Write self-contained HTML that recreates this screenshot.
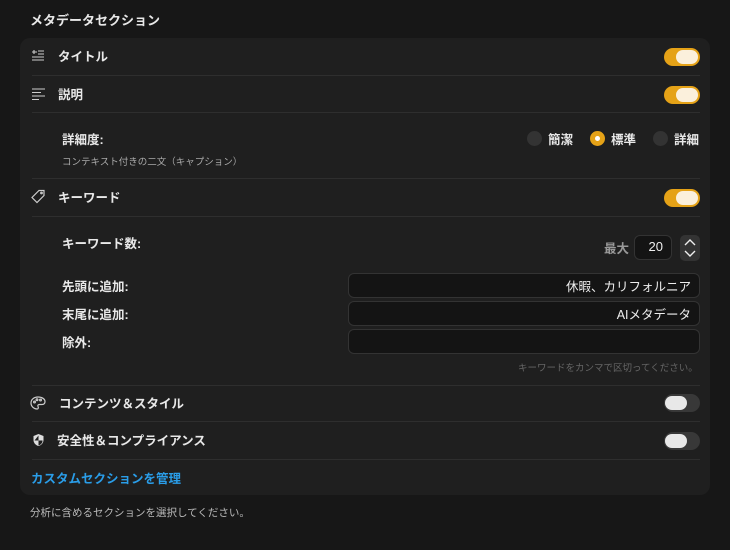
<!DOCTYPE html>
<html><head><meta charset="utf-8"><style>
*{margin:0;padding:0;box-sizing:border-box}
body{width:730px;height:550px;background:#171717;font-family:"Liberation Sans","Noto Sans CJK JP",sans-serif;color:#e6e6e6;position:relative;overflow:hidden}
.a{position:absolute}
.card{left:20px;top:38px;width:690px;height:457px;background:#1f1f1f;border-radius:10px}
.div{position:absolute;left:32px;width:668px;height:1px;background:#2e2e2e}
.lbl{font-size:12.5px;font-weight:bold;color:#e8e8e8;white-space:nowrap;margin-top:-2px}
.tg{position:absolute;left:664px;width:36px;height:18px;border-radius:9px}
.tg.on{background:#e5a217}
.tg.off{background:#383838}
.tg i{position:absolute;top:2px;width:22px;height:14px;border-radius:7px}
.tg.on i{right:2px;background:#fbf0dc}
.tg.off i{left:1px;background:#e8e8e8}
.inp{position:absolute;left:348px;width:352px;height:25px;background:#141414;border:1px solid #333;border-radius:6px;font-size:12.5px;color:#eee;text-align:right;padding:2px 8px 0 0}
.rad{position:absolute;width:15px;height:15px;border-radius:50%;background:#333}
</style></head><body>
<div class="a lbl" style="left:30px;top:12px;font-size:13px">メタデータセクション</div>
<div class="a card"></div>

<svg class="a" style="left:31px;top:49px" width="15" height="14" viewBox="0 0 15 14" fill="none" stroke="#ccc" stroke-width="1.1"><path d="M1 3h5M3 1v4M7 2h6M7 5h6M1 8h12M1 11h12"/></svg>
<div class="a lbl" style="left:58px;top:48px">タイトル</div>
<div class="tg on" style="top:48px"><i></i></div>
<div class="div" style="top:75px"></div>

<svg class="a" style="left:31px;top:88px" width="15" height="12" viewBox="0 0 15 12" fill="none" stroke="#ccc" stroke-width="1.1"><path d="M1 1h13M1 4.5h9M1 8h13M1 11.5h7"/></svg>
<div class="a lbl" style="left:58px;top:86px">説明</div>
<div class="tg on" style="top:86px"><i></i></div>
<div class="div" style="top:112px"></div>

<div class="a lbl" style="left:62px;top:131px">詳細度:</div>
<div class="a" style="left:62px;top:154px;font-size:9.5px;color:#aaa">コンテキスト付きの二文（キャプション）</div>
<div class="rad" style="left:527px;top:131px"></div>
<div class="a lbl" style="left:548px;top:131px">簡潔</div>
<div class="rad" style="left:590px;top:131px;background:#e5a217"><div style="position:absolute;left:5px;top:5px;width:5px;height:5px;border-radius:50%;background:#fff"></div></div>
<div class="a lbl" style="left:611px;top:131px">標準</div>
<div class="rad" style="left:653px;top:131px"></div>
<div class="a lbl" style="left:674px;top:131px">詳細</div>
<div class="div" style="top:178px"></div>

<svg class="a" style="left:30px;top:189px" width="16" height="15" viewBox="0 0 16 15" fill="none" stroke="#ccc" stroke-width="1.2"><path d="M9 1.5h5v5L7 13.5 2 8.5z"/><circle cx="11.5" cy="4" r=".8"/></svg>
<div class="a lbl" style="left:58px;top:189px">キーワード</div>
<div class="tg on" style="top:189px"><i></i></div>
<div class="div" style="top:216px"></div>

<div class="a lbl" style="left:62px;top:235px">キーワード数:</div>
<div class="a lbl" style="left:604px;top:240px;color:#999">最大</div>
<div class="a" style="left:634px;top:235px;width:38px;height:25px;background:#141414;border:1px solid #333;border-radius:6px;font-size:13px;text-align:right;padding:3px 8px 0 0;color:#eee">20</div>
<div class="a" style="left:680px;top:235px;width:20px;height:26px;background:#333;border-radius:5px"></div>
<svg class="a" style="left:680px;top:235px" width="20" height="26" viewBox="0 0 20 26" fill="none" stroke="#eee" stroke-width="1.4"><path d="M5 10l5-5 5 5M5 16l5 5 5-5"/></svg>

<div class="a lbl" style="left:62px;top:278px">先頭に追加:</div>
<div class="inp" style="top:273px">休暇、カリフォルニア</div>
<div class="a lbl" style="left:62px;top:306px">末尾に追加:</div>
<div class="inp" style="top:301px">AIメタデータ</div>
<div class="a lbl" style="left:62px;top:334px">除外:</div>
<div class="inp" style="top:329px"></div>
<div class="a" style="left:518px;top:360px;font-size:9.5px;color:#666">キーワードをカンマで区切ってください。</div>
<div class="div" style="top:385px"></div>

<svg class="a" style="left:30px;top:396px" width="16" height="14" viewBox="0 0 16 14" fill="none" stroke="#ccc" stroke-width="1.2"><path d="M8 1C4 1 1 3.5 1 7s3 6 6 6c1.5 0 1.5-1.5 1-2.5s0-2 1.5-2H12c2 0 3-1 3-3C15 3 12 1 8 1z"/><circle cx="4.5" cy="6" r=".9"/><circle cx="7" cy="3.8" r=".9"/><circle cx="10.5" cy="4" r=".9"/></svg>
<div class="a lbl" style="left:59px;top:395px">コンテンツ＆スタイル</div>
<div class="tg off" style="top:394px"><i></i></div>
<div class="div" style="top:421px"></div>

<svg class="a" style="left:32px;top:433px" width="13" height="14" viewBox="0 0 13 14"><path d="M6.5 1L1.5 3v4c0 3 2.5 5.5 5 6 2.5-.5 5-3 5-6V3z" fill="#ddd"/><path d="M6.5 2.5v5h-4M6.5 7.5h4v.5c0 2-2 4-4 4.5z" fill="#1f1f1f"/></svg>
<div class="a lbl" style="left:57px;top:432px">安全性＆コンプライアンス</div>
<div class="tg off" style="top:432px"><i></i></div>
<div class="div" style="top:459px"></div>

<div class="a lbl" style="left:31px;top:470px;color:#2a9de8">カスタムセクションを管理</div>
<div class="a" style="left:30px;top:505px;font-size:10.5px;color:#bbb">分析に含めるセクションを選択してください。</div>
</body></html>
